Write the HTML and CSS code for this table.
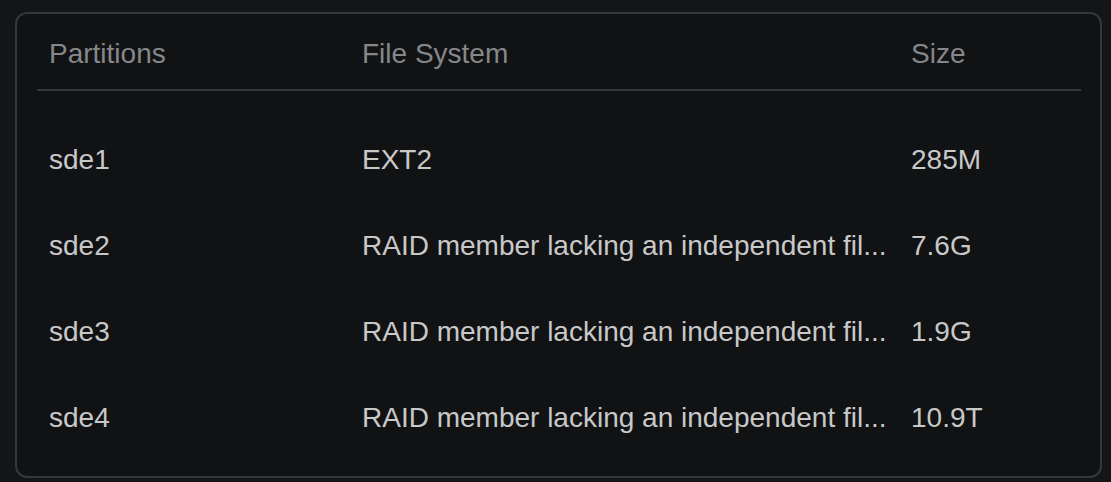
FILE: index.html
```html
<!DOCTYPE html>
<html>
<head>
<meta charset="utf-8">
<link rel="stylesheet" href="styles.css">
</head>
<body>
<div class="card">
  <div class="row head">
    <div class="cell">Partitions</div>
    <div class="cell">File System</div>
    <div class="cell">Size</div>
  </div>
  <div class="body">
    <div class="row">
      <div class="cell">sde1</div>
      <div class="cell">EXT2</div>
      <div class="cell">285M</div>
    </div>
    <div class="row">
      <div class="cell">sde2</div>
      <div class="cell">RAID member lacking an independent fil...</div>
      <div class="cell">7.6G</div>
    </div>
    <div class="row">
      <div class="cell">sde3</div>
      <div class="cell">RAID member lacking an independent fil...</div>
      <div class="cell">1.9G</div>
    </div>
    <div class="row">
      <div class="cell">sde4</div>
      <div class="cell">RAID member lacking an independent fil...</div>
      <div class="cell">10.9T</div>
    </div>
  </div>
</div>
</body>
</html>
```
FILE: styles.css
```css
html, body {
  margin: 0;
  padding: 0;
  background: #141517;
}
body {
  padding: 12px 9px 4px 15px;
  font-family: "Liberation Sans", Arial, sans-serif;
  font-size: 28px;
}
.card {
  height: 466px;
  box-sizing: border-box;
  border: 2px solid #36373a;
  border-radius: 12px;
  background: #111214;
  padding: 0 19px 15px 20px;
}
.row {
  display: grid;
  grid-template-columns: 313px 549px 1fr;
  align-items: center;
  height: 86px;
  color: #c8c8c8;
}
.head {
  height: auto;
  padding: 24px 0 19px;
  border-bottom: 2px solid #36373a;
  color: #86878a;
}
.body {
  padding-top: 26px;
}
.cell {
  padding: 0 12px;
  white-space: nowrap;
  overflow: hidden;
  line-height: 32px;
}
```
